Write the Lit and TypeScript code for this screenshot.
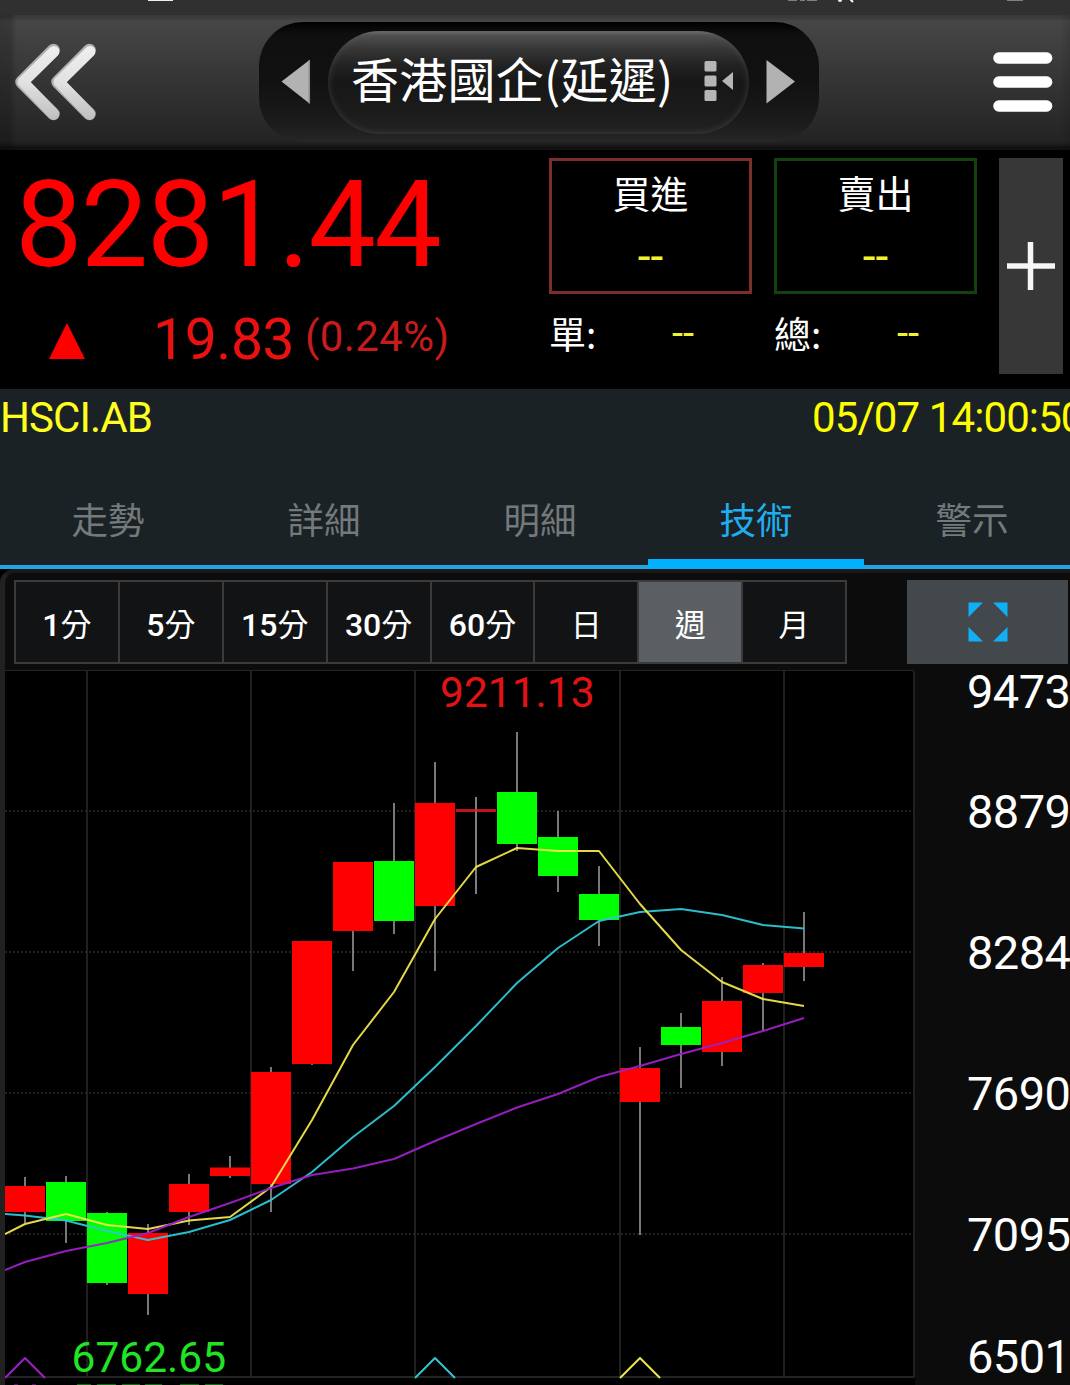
import { LitElement, html, svg, css } from "lit";
import { customElement, property, state } from "lit/decorators.js";
import { classMap } from "lit/directives/class-map.js";

type Candle = { top: number; bottom: number; high: number; low: number; up: boolean };

const c = (top: number, bottom: number, high: number, low: number, up: boolean): Candle => ({
  top, bottom, high, low, up,
});

const CANDLES: Candle[] = [
  c(1186, 1212, 1177, 1223, true),
  c(1182, 1221, 1176, 1243, false),
  c(1213, 1283, 1212, 1285, false),
  c(1233, 1294, 1224, 1315, true),
  c(1184, 1212, 1174, 1225, true),
  c(1167.5, 1176, 1156, 1178, true),
  c(1072, 1184, 1067, 1212, true),
  c(941, 1064, 941, 1065, true),
  c(862, 931, 862, 971, true),
  c(861, 921, 803, 934, false),
  c(803, 906, 762, 971, true),
  c(809, 812, 797, 894, true),
  c(792, 844, 732, 851, false),
  c(837, 876, 811, 892, false),
  c(894, 920, 866, 946, false),
  c(1068, 1102, 1047, 1235, true),
  c(1027, 1045, 1013, 1088, false),
  c(1001, 1052, 977, 1066, true),
  c(965, 993, 963, 1031, true),
  c(953, 967, 912, 981, true),
];

const STEP = 41;
const AVERAGES = [
  { name: "cyan", values: [1215.5, 1220.5, 1231, 1240, 1232, 1220, 1200, 1172, 1137, 1106, 1067, 1026, 983, 948, 921, 912, 909, 915, 925, 928.5], start: 1214 },
  { name: "yellow", values: [1224, 1214, 1225, 1229, 1220.5, 1217, 1187, 1120, 1045, 992, 919, 867, 848, 851, 851, 904, 950, 982, 999, 1006], start: 1234 },
  { name: "purple", values: [1262, 1251, 1243, 1233, 1217, 1203, 1188, 1175, 1168.5, 1159, 1141, 1124, 1107.5, 1094, 1077, 1066, 1054, 1043, 1031, 1018], start: 1270 },
];

const AXIS = [
  { label: "9473", y: 708 },
  { label: "8879", y: 827.5 },
  { label: "8284", y: 968.5 },
  { label: "7690", y: 1109.5 },
  { label: "7095", y: 1250.5 },
  { label: "6501", y: 1373 },
];

@customElement("status-strip")
class StatusStrip extends LitElement {
  static styles = css`
    :host { display: block; height: 15px; background: #303030; }
    svg { display: block; }
  `;
  render() {
    return html`<svg width="1070" height="15" viewBox="0 0 1070 15">
      <rect x="148" y="-1" width="25" height="2" fill="#eee" />
      <path d="M788 0h9M800 0h5M807 0h10M1007 0h16" stroke="#999" stroke-width="1.6" />
      <circle cx="840" cy="0" r="2" fill="#fff" />
      <path d="M849 -2l4 4" stroke="#fff" stroke-width="2" />
    </svg>`;
  }
}

@customElement("title-bar")
class TitleBar extends LitElement {
  static styles = css`
    :host {
      display: flex; align-items: flex-start;
      box-sizing: border-box; height: 135px; padding: 7px 0 0 0;
      background:
        linear-gradient(90deg, rgba(0,0,0,.22), rgba(0,0,0,.2) 10px, transparent 17px, transparent 1060px, rgba(0,0,0,.12)),
        linear-gradient(#383838 0, #3c3c3c 3px, #464646 6px, #242424 125px, #1e1e1e 129px, #121212 132px, #121212 135px);
    }
    svg { display: block; flex: none; }
    .selector {
      display: flex; align-items: flex-start; justify-content: space-between; flex: none;
      box-sizing: border-box; width: 560px; height: 120px; margin: 0 auto 0 19px; padding: 9px 22px 0 21px;
      border-radius: 44px; background: linear-gradient(#000, #0f0f0f 12px, #111 60px, #1b1b1b 100px, #262626);
    }
    .arrow { margin-top: 28px; }
    .pill {
      display: flex; box-sizing: border-box; width: 421px; height: 103px; padding-left: 23px; border-radius: 52px;
      background: linear-gradient(#646464 0, #626262 2px, #505050 4px, #383838 17px, #222 34px, #171717 52px, #1b1b1b 80px, #232323);
      box-shadow: inset 0 0 6px 1px rgba(110,110,110,.32);
    }
    .name {
      width: 321px; margin-right: 31px; color: #fff; white-space: nowrap; letter-spacing: .25px;
      font: 48px/92px "Noto Sans CJK TC", sans-serif;
    }
    .marker { margin-top: 28px; }
    .menu { margin: 26px 16px 0 0; }
  `;
  render() {
    return html`
      <svg width="240" height="128" viewBox="0 22 240 128">
        <defs>
          <linearGradient id="steel" gradientUnits="userSpaceOnUse" x1="0" y1="43" x2="0" y2="120">
            <stop offset="0" stop-color="#f0f0f0" /><stop offset=".5" stop-color="#e2e2e2" /><stop offset="1" stop-color="#bfbfbf" />
          </linearGradient>
        </defs>
        <g fill="none" stroke-width="12.5" stroke-linecap="round" stroke-linejoin="round">
          <path d="M53.500 50L21.500 82L53.500 114M89.500 50L57.500 82L89.500 114" stroke="#b0b0b0" />
          <path d="M54 51.500L23 82L53.500 114M90 51.500L59 82L89.500 114" stroke="url(#steel)" stroke-width="11" />
        </g>
      </svg>
      <div class="selector">
        <svg class="arrow" width="31" height="46" viewBox="280 59 31 46">
          <path d="M281.5 81.5L309.5 60V103.500Z" fill="#b2b2b2" />
          <path d="M309.300 60V103.500" stroke="#8e8e8e" stroke-width="1.500" />
        </svg>
        <div class="pill">
          <span class="name">香港國企(延遲)</span>
          <svg class="marker" width="32" height="44" viewBox="703 59 32 44">
            <g fill="#b6b6b6">
              <rect x="704.500" y="61" width="12" height="10.500" rx="1.500" />
              <rect x="704.500" y="75.500" width="12" height="11" rx="1.500" />
              <rect x="704.500" y="90" width="12" height="11" rx="1.500" />
              <path d="M722 81L733 72V90Z" />
            </g>
          </svg>
        </div>
        <svg class="arrow" width="31" height="46" viewBox="766 59 31 46">
          <path d="M795 81.500L766.500 60V103.500Z" fill="#b2b2b2" />
        </svg>
      </div>
      <svg class="menu" width="64" height="70" viewBox="990 48 64 70">
        <g fill="#fff">
          <rect x="993.300" y="52.300" width="59" height="11.400" rx="5.500" />
          <rect x="993.300" y="76.300" width="59" height="11.400" rx="5.500" />
          <rect x="993.300" y="100.300" width="59" height="11.400" rx="5.500" />
        </g>
      </svg>`;
  }
}

@customElement("quote-side")
class QuoteSide extends LitElement {
  @property() label = "";
  @property() total = "";
  @property({ reflect: true }) kind = "buy";
  static styles = css`
    :host { display: block; width: 203px; font-family: "Noto Sans CJK TC", sans-serif; color: #fff; }
    .box { box-sizing: border-box; height: 136px; border: 3px solid #7a2f2d; text-align: center; }
    :host([kind="sell"]) .box { border-color: #14420f; }
    .label { font-size: 38px; line-height: 62px; }
    .dash { font-family: Roboto, sans-serif; color: #f2f230; }
    .box .dash { font-size: 46px; line-height: 67px; }
    .foot { display: flex; height: 80px; line-height: 78px; font-size: 37px; }
    .foot .name { width: 123px; }
    .foot .dash { font-size: 40px; line-height: 80px; }
  `;
  render() {
    return html`
      <div class="box">
        <div class="label">${this.label}</div>
        <div class="dash">--</div>
      </div>
      <div class="foot"><span class="name">${this.total}:</span><span class="dash">--</span></div>`;
  }
}

@customElement("quote-panel")
class QuotePanel extends LitElement {
  static styles = css`
    :host {
      display: flex; box-sizing: border-box; height: 239px; padding: 8px 7px 0 0; background: #000;
      font-family: Roboto, sans-serif;
    }
    .price { width: 549px; }
    .last { padding: 7px 0 0 15px; font-size: 120px; line-height: 120px; letter-spacing: -1.600px; color: #f00; }
    .change { display: flex; align-items: baseline; height: 80px; padding: 15px 0 0 49px; }
    .up { width: 36px; height: 36px; margin-right: 68px; }
    .diff { width: 152px; font-size: 57px; line-height: 80px; letter-spacing: -.4px; color: #ec1111; }
    .pct { font-size: 42px; line-height: 60px; letter-spacing: .4px; color: #c71c1c; position: relative; top: -8px; }
    .sides { display: flex; gap: 22px; margin-right: 22px; }
    .add { display: flex; align-items: center; justify-content: center; width: 64px; height: 216px; background: #373737; }
  `;
  render() {
    return html`
      <div class="price">
        <div class="last">8281.44</div>
        <div class="change">
          <svg class="up" viewBox="0 0 36 36"><path d="M18 0L36 36H0Z" fill="#f00" /></svg>
          <span class="diff">19.83</span><span class="pct">(0.24%)</span>
        </div>
      </div>
      <div class="sides">
        <quote-side kind="buy" label="買進" total="單"></quote-side>
        <quote-side kind="sell" label="賣出" total="總"></quote-side>
      </div>
      <div class="add">
        <svg width="50" height="50" viewBox="0 0 50 50"><path d="M1 25H49M24.500 1V49" stroke="#f6f6f6" stroke-width="5.500" /></svg>
      </div>`;
  }
}

@customElement("info-tabs")
class InfoTabs extends LitElement {
  @state() active = "技術";
  static styles = css`
    :host { display: block; height: 180px; background: #1b2225; overflow: hidden; }
    .info {
      display: flex; height: 86px; font: 42px/58px Roboto, sans-serif; color: #ff2; white-space: nowrap;
    }
    .code { flex: none; width: 812px; letter-spacing: -.9px; }
    .time { flex: none; color: #ff0; letter-spacing: -.9px; }
    .tabs { display: flex; width: 1080px; height: 94px; box-sizing: border-box; box-shadow: inset 0 -4px #21a5e4; }
    .tab {
      box-sizing: border-box; width: 216px; text-align: center; color: #74797b;
      font: 36.500px/88px "Noto Sans CJK TC", sans-serif;
    }
    .tab.on { color: #1faeef; border-bottom: 10px solid #00b0ff; }
  `;
  render() {
    return html`
      <div class="info"><span class="code">HSCI.AB</span><span class="time">05/07 14:00:50</span></div>
      <div class="tabs">
        ${["走勢", "詳細", "明細", "技術", "警示"].map(
          (t) => html`<div class=${classMap({ tab: true, on: t === this.active })} @click=${() => (this.active = t)}>${t}</div>`
        )}
      </div>`;
  }
}

@customElement("period-bar")
class PeriodBar extends LitElement {
  @state() active = "週";
  static styles = css`
    :host { display: flex; justify-content: space-between; height: 84px; }
    .periods { display: flex; box-sizing: border-box; width: 833px; border: 2px solid #3b3b3c; background: #121315; }
    .period {
      flex: 1 1 0; height: 80px; text-align: center; color: #fff; border-left: 2px solid #3b3b3c;
      font: 500 32px/86px Roboto, "Noto Sans CJK TC", sans-serif;
    }
    .unit { font-weight: 400; font-size: 31px; }
    .period:first-child { border-left: 0; }
    .period.on { background: #5b5f63; }
    .full { display: flex; align-items: center; justify-content: center; width: 161px; background: #42484b; }
  `;
  render() {
    return html`
      <div class="periods">
        ${[["1", "分"], ["5", "分"], ["15", "分"], ["30", "分"], ["60", "分"], ["", "日"], ["", "週"], ["", "月"]].map(([n, u]) => {
          const key = n + u;
          return html`<div class=${classMap({ period: true, on: key === this.active })} @click=${() => (this.active = key)}>${n}<span class="unit">${u}</span></div>`;
        })}
      </div>
      <div class="full">
        <svg width="40" height="40" viewBox="0 0 40 40">
          <path d="M.5 .5H15L.5 15ZM39.500 .5V15L25 .5ZM.5 39.500V25L15 39.500ZM39.500 39.500H25L39.500 25Z" fill="#10b0f5" />
        </svg>
      </div>`;
  }
}

@customElement("candle-chart")
class CandleChart extends LitElement {
  static styles = css`
    :host { display: block; height: 715px; }
    svg { display: block; }
    .axis, .peak { font-family: Roboto, sans-serif; }
    .axis { font-size: 47px; fill: #fff; letter-spacing: -.6px; }
    .peak { font-size: 42.500px; letter-spacing: 0; }
    .high { fill: #e31313; }
    .low { fill: #20e425; }
    .avg { fill: none; stroke-width: 2; stroke-linejoin: round; }
    .yellow { stroke: #f0e44c; }
    .cyan { stroke: #2fc6d6; }
    .purple { stroke: #9c20c6; }
    .over { opacity: .95; }
  `;
  render() {
    const markers: [number, string][] = [[25, "purple"], [435, "cyan"], [640, "yellow"]];
    return html`<svg width="1065" height="715" viewBox="5 670 1065 715">
      <rect x="5" y="670" width="910" height="715" fill="#000" />
      <path d="M5 670.500H914" stroke="#242424" />
      <path d="M87 671V1377M251 671V1377M415 671V1377M620 671V1377M784 671V1377M914 671V1377M5 1377H914.500" stroke="#242424" stroke-width="1.800" fill="none" />
      <path d="M5 811H914M5 952H914M5 1093H914M5 1234H914" stroke="#2d2d2d" stroke-width="1.600" stroke-dasharray="2 2" />
      ${CANDLES.map((k, i) => {
        const x = 5 + STEP * i;
        const flat = k.bottom - k.top < 4;
        return svg`
          <path d=${`M${x + 20} ${k.high}V${k.low}`} stroke="#858585" stroke-width="1.8" />
          <rect x=${x} y=${k.top} width="40" height=${k.bottom - k.top}
            fill=${flat ? "#bd1519" : k.up ? "#ff0000" : "#00ff00"} />
          ${flat ? svg`<path d=${`M${x + 20} ${k.high}V${k.low}`} stroke="#858585" stroke-width="1.8" opacity=".5" />` : ""}`;
      })}
      ${AVERAGES.map((a) => svg`<polyline class=${`avg over ${a.name}`}
        points=${`5,${a.start} ` + a.values.map((v, i) => `${25 + STEP * i},${v}`).join(" ")} />`)}
      ${markers.map(([x, n]) => svg`<path class=${`avg ${n}`} d=${`M${x - 20} 1378L${x} 1358L${x + 20} 1378`} />`)}
      <text class="peak high" x="440" y="706.500">9211.13</text>
      <text class="peak low" x="71.500" y="1372">6762.65</text>
      <path d="M77 1384.500h14M97 1384.500h19M122 1384.500h18M145 1384.500h17M180 1384.500h19M205 1384.500h18" stroke="#0f6a12" />
      <path d="M14 1384.500h4M32 1384.500h4" stroke="#4d1262" />
      ${AXIS.map((a) => svg`<text class="axis" x="967" y=${a.y}>${a.label}</text>`)}
    </svg>`;
  }
}

@customElement("app-root")
class AppRoot extends LitElement {
  static styles = css`
    :host { display: block; width: 1070px; height: 1385px; overflow: hidden; background: #000; }
    .panel {
      box-sizing: border-box; height: 816px; border-left: 5px solid #212121; border-top: 4px solid #191919;
      border-top-left-radius: 14px; background: #0c0c0c; overflow: hidden;
    }
    .tools { display: block; padding: 7px 2px 6px 9px; }
  `;
  render() {
    return html`
      <status-strip></status-strip>
      <title-bar></title-bar>
      <quote-panel></quote-panel>
      <info-tabs></info-tabs>
      <div class="panel">
        <div class="tools"><period-bar></period-bar></div>
        <candle-chart></candle-chart>
      </div>`;
  }
}
